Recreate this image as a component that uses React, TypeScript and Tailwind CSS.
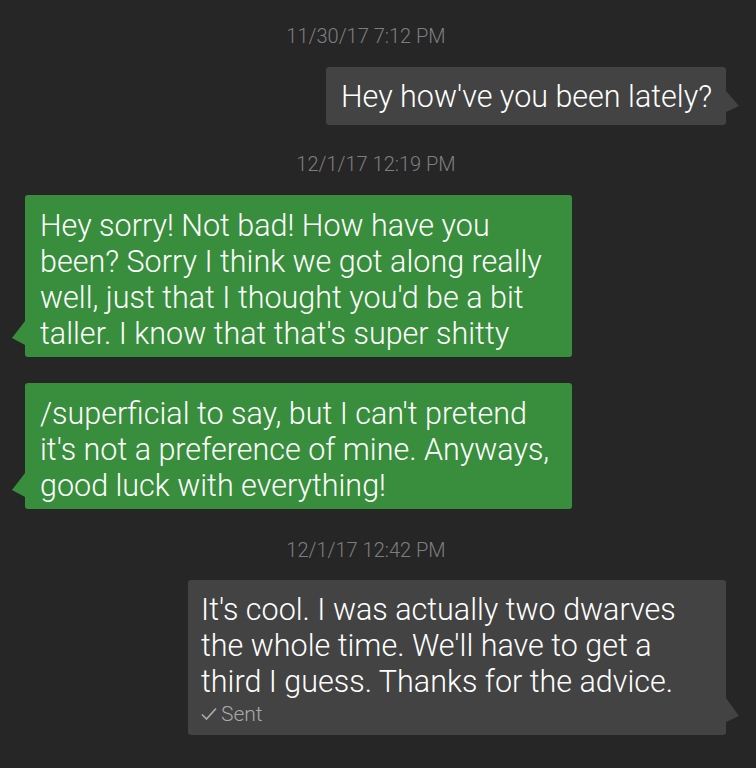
import React from 'react';

function Stamp({ text, center }: { text: string; center: 'a' | 'b' }) {
  return (
    <div className={`flex h-[24px] items-center justify-center text-[20px] text-[#7e7e80] ${center === 'a' ? 'pr-[24px]' : 'pr-[4px]'}`}>
      {text}
    </div>
  );
}

export default function App() {
  return (
    <div
      className="min-h-[768px] w-[756px] bg-[#262626] pt-[24px] font-light text-white"
      style={{ fontFamily: 'Roboto, "Noto Sans", sans-serif' }}
    >
      <Stamp text="11/30/17 7:12 PM" center="a" />

      <div className="mt-[19px] flex justify-end pr-[30px]">
        <div className="relative w-[400px] rounded-[3px] bg-[#434343] px-[15px] pb-[10px] pt-[12px] text-[30.5px] leading-[36px] whitespace-nowrap">
          Hey how've you been lately?
          <svg className="absolute right-[-13px] top-[24px]" width="13" height="21" viewBox="0 0 13 21">
            <polygon points="0,0 13,15 0,21" fill="#434343" />
          </svg>
        </div>
      </div>

      <div className="mt-[27px]">
        <Stamp text="12/1/17 12:19 PM" center="b" />
      </div>

      <div className="mt-[19px] pl-[25px]">
        <div className="relative w-[547px] rounded-[3px] bg-[#388e3c] px-[15px] pb-[5px] pt-[13px] text-[30.5px] leading-[36px] whitespace-nowrap">
          Hey sorry! Not bad! How have you
          <br />
          been? Sorry I think we got along really
          <br />
          well, just that I thought you'd be a bit
          <br />
          taller. I know that that's super shitty
          <svg className="absolute left-[-13px] top-[126px]" width="13" height="24" viewBox="0 0 13 24">
            <polygon points="13,0 0,17 13,24" fill="#388e3c" />
          </svg>
        </div>
      </div>

      <div className="mt-[26px] pl-[25px]">
        <div className="relative w-[547px] rounded-[3px] bg-[#388e3c] px-[15px] pb-[5px] pt-[13px] text-[30.5px] leading-[36px] whitespace-nowrap">
          /superficial to say, but I can't pretend
          <br />
          it's not a preference of mine. Anyways,
          <br />
          good luck with everything!
          <svg className="absolute left-[-13px] top-[90px]" width="13" height="24" viewBox="0 0 13 24">
            <polygon points="13,0 0,17 13,24" fill="#388e3c" />
          </svg>
        </div>
      </div>

      <div className="mt-[29px]">
        <Stamp text="12/1/17 12:42 PM" center="a" />
      </div>

      <div className="mt-[18px] flex justify-end pr-[30px]">
        <div className="relative w-[538px] rounded-[3px] bg-[#434343] px-[13px] pb-[7px] pt-[12px] text-[30.5px] leading-[36px] whitespace-nowrap">
          It's cool. I was actually two dwarves
          <br />
          the whole time. We'll have to get a
          <br />
          third I guess. Thanks for the advice.
          <div className="flex h-[28px] items-center gap-[4px] text-[21px] text-[#a9a9a9]">
            <svg width="16" height="14" viewBox="0 0 16 14" fill="none">
              <polyline points="1,7.5 5.5,12 15,1.5" stroke="#a9a9a9" strokeWidth="1.7" />
            </svg>
            Sent
          </div>
          <svg className="absolute right-[-13px] top-[118px]" width="13" height="24" viewBox="0 0 13 24">
            <polygon points="0,0 13,18 0,24" fill="#434343" />
          </svg>
        </div>
      </div>
      <div className="h-[33px]" />
    </div>
  );
}
